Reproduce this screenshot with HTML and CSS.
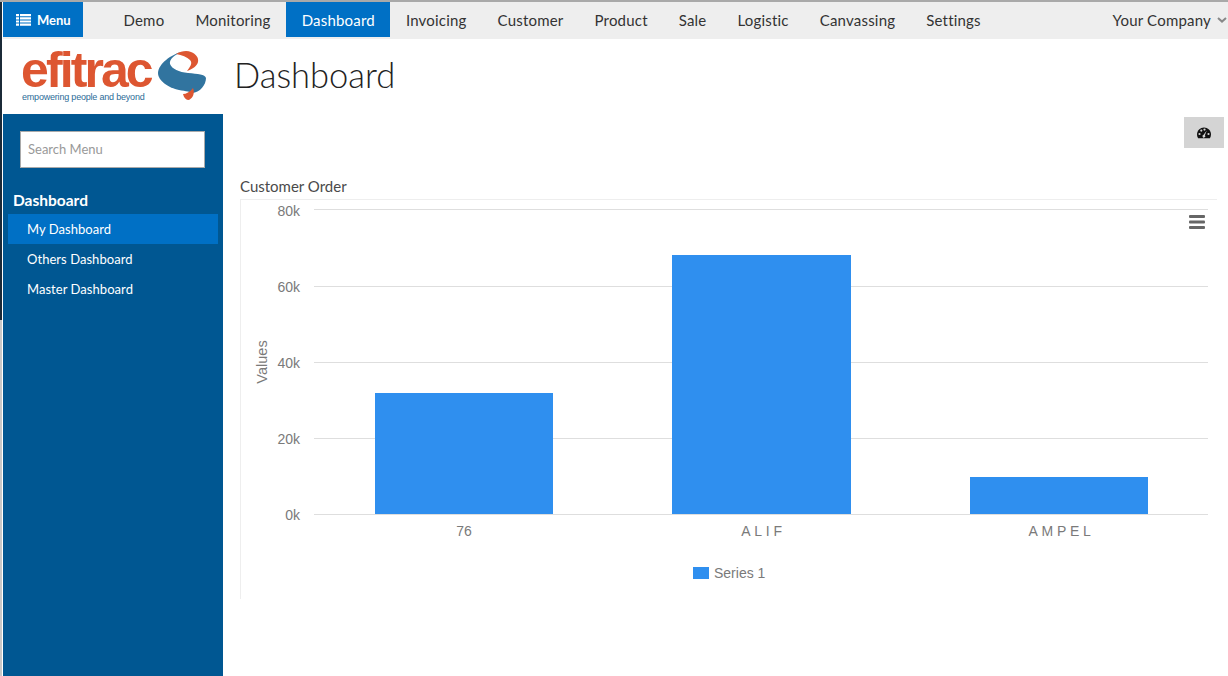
FILE: index.html
```html
<!DOCTYPE html>
<html lang="en">
<head>
  <meta charset="UTF-8">
  <title>Dashboard</title>
  <link rel="stylesheet" href="styles.css">
</head>
<body>
  <div class="app">
    <nav class="topbar">
      <a class="menu-btn" href="#">
        <svg class="menu-icon" width="15" height="12" viewBox="0 0 15 12"><path fill="#fff" d="M0 0h3v2.2H0zM4 0h11v2.2H4zM0 3.2h3v2.2H0zM4 3.2h11v2.2H4zM0 6.4h3v2.2H0zM4 6.4h11v2.2H4zM0 9.6h3v2.2H0zM4 9.6h11v2.2H4z"/></svg>
        Menu
      </a>
      <ul class="nav">
        <li>Demo</li>
        <li>Monitoring</li>
        <li class="active">Dashboard</li>
        <li>Invoicing</li>
        <li>Customer</li>
        <li>Product</li>
        <li>Sale</li>
        <li>Logistic</li>
        <li>Canvassing</li>
        <li>Settings</li>
      </ul>
      <div class="company">
        Your Company
        <svg width="10" height="6" viewBox="0 0 10 6"><path fill="none" stroke="#888" stroke-width="2" d="M1 1l4 3.6L9 1"/></svg>
      </div>
    </nav>

    <header class="head">
      <div class="logo">
        <div class="logo-text">
          <span class="logo-name">efitrac</span>
          <span class="logo-tag">empowering people and beyond</span>
        </div>
        <svg class="logo-mark" width="50" height="52" viewBox="156 49 50 52">
          <path fill="#31749f" d="M180 52C170 55 158 63 157 73C157 81 168 88 178 90C185 91 190 92 192 93C199 92 205 85 205 78C204 74 197 74 187 73C178 72 171 69 169 64C168 59 174 55 180 52Z"/>
          <path fill="#dd5631" d="M175 54C180 51 186 50 190 52C195 54 198 58 197 62C196 66 192 69 186 71C189 67 192 63 189 60C186 57 181 55 175 54Z"/>
          <path fill="#dd5631" d="M182 94C185 94 189 92 192 88C194 93 192 98 188 100C185 100 183 98 182 94Z"/>
        </svg>
      </div>
      <h1>Dashboard</h1>
    </header>

    <div class="body-row">
      <aside class="sidebar">
        <input class="search" type="text" placeholder="Search Menu">
        <h3>Dashboard</h3>
        <ul class="side-menu">
          <li class="active">My Dashboard</li>
          <li>Others Dashboard</li>
          <li>Master Dashboard</li>
        </ul>
      </aside>

      <main class="content">
        <div class="toolbar">
          <button class="gauge-btn" type="button">
            <svg width="14" height="12" viewBox="0 0 14 12">
              <path fill="#111" d="M7 0.5C3.2 0.5 0 3.6 0 7.5C0 8.9 0.4 10.200 1.100 11.300H12.900C13.600 10.200 14 8.900 14 7.500C14 3.600 10.800 0.500 7 0.500Z"/>
              <g fill="#d4d4d4">
                <circle cx="2.500" cy="7" r="1.100"/>
                <circle cx="4.300" cy="3.600" r="1.100"/>
                <circle cx="7.500" cy="2.600" r="1.100"/>
                <circle cx="11.500" cy="7" r="1.100"/>
                <path d="M9.800 3.500L7.900 8.200A1.400 1.400 0 1 1 6.600 7.800Z"/>
              </g>
            </svg>
          </button>
        </div>
        <div class="panel-title">Customer Order</div>
        <div class="chart">
          <svg width="977" height="399" viewBox="241 200 977 399">
            <g class="grid">
              <line x1="314" x2="1208" y1="209.500" y2="209.500"/>
              <line x1="314" x2="1208" y1="286.500" y2="286.500"/>
              <line x1="314" x2="1208" y1="362.500" y2="362.500"/>
              <line x1="314" x2="1208" y1="438.500" y2="438.500"/>
              <line x1="314" x2="1208" y1="514.500" y2="514.500"/>
            </g>
            <g class="bars">
              <rect x="375" y="393" width="178" height="121"/>
              <rect x="672" y="255" width="179" height="259"/>
              <rect x="970" y="477" width="178" height="37"/>
            </g>
            <g class="y-labels">
              <text x="300" y="216">80k</text>
              <text x="300" y="292">60k</text>
              <text x="300" y="368">40k</text>
              <text x="300" y="444">20k</text>
              <text x="300" y="520">0k</text>
            </g>
            <text class="y-title" transform="translate(267 362) rotate(-90)">Values</text>
            <g class="x-labels">
              <text x="464" y="536">76</text>
              <text class="spaced" x="763.500" y="536">ALIF</text>
              <text class="spaced" x="1061.500" y="536">AMPEL</text>
            </g>
            <rect class="legend-box" x="693" y="567" width="16" height="12"/>
            <text class="legend" x="714" y="578">Series 1</text>
            <g class="chart-menu">
              <rect x="1189" y="215" width="16" height="3" rx="1"/>
              <rect x="1189" y="220.500" width="16" height="3" rx="1"/>
              <rect x="1189" y="226" width="16" height="3" rx="1"/>
            </g>
          </svg>
        </div>
      </main>
    </div>
  </div>
</body>
</html>
```

FILE: styles.css
```css
* {
  box-sizing: border-box;
}

html, body {
  height: 100%;
}

body {
  margin: 0;
  font-family: 'Lato', sans-serif;
  background-color: white;
  color: #333;
  overflow: hidden;
}

.app {
  display: flex;
  flex-direction: column;
  height: 676px;
  padding-left: 3px;
  border-top: 2px solid #a9a9a9;
  background: linear-gradient(to bottom, #1b2a38 0, #1b2a38 318px, #c8c8c8 318px) no-repeat 0 0 / 2px 100%;
}

.topbar {
  display: flex;
  height: 37px;
  flex-shrink: 0;
  background-color: #eeeeee;
}

.menu-btn {
  display: flex;
  align-items: center;
  gap: 6px;
  width: 80px;
  height: 35px;
  padding-left: 13px;
  background-color: #0070c5;
  color: white;
  font-size: 13px;
  font-weight: bold;
  text-decoration: none;
}

.nav {
  display: flex;
  list-style: none;
  margin: 0 0 0 25px;
  padding: 0;
}

.nav li {
  height: 35px;
  line-height: 36px;
  padding: 0 15.500px;
  font-size: 15px;
  letter-spacing: 0.200px;
  color: #333;
}

.nav li.active {
  background-color: #0070c5;
  color: white;
}

.company {
  display: flex;
  align-items: center;
  gap: 6px;
  margin-left: auto;
  padding: 0 1px 2px 0;
  height: 37px;
  font-size: 15px;
  letter-spacing: 0.200px;
  color: #333;
}

.head {
  display: flex;
  height: 75px;
  flex-shrink: 0;
}

.logo {
  display: flex;
  width: 220px;
  padding: 10px 0 0 19px;
}

.logo-text {
  display: flex;
  flex-direction: column;
  width: 135px;
}

.logo-name {
  font-family: 'Liberation Sans', sans-serif;
  font-size: 50px;
  font-weight: bold;
  line-height: 42px;
  letter-spacing: -2.900px;
  margin-left: -1px;
  color: #dd5631;
}

.logo-tag {
  margin-top: 1px;
  font-family: 'Liberation Sans', sans-serif;
  font-size: 9px;
  line-height: 11px;
  letter-spacing: -0.200px;
  white-space: nowrap;
  color: #2c6c98;
}

.logo-mark {
  flex-shrink: 0;
}

h1 {
  margin: 15px 0 0 11px;
  font-size: 34.500px;
  font-weight: 300;
  line-height: 42px;
  color: #222;
}

.body-row {
  display: flex;
  flex: 1;
}

.sidebar {
  width: 220px;
  flex-shrink: 0;
  padding: 17px 5px 0;
  background-color: #005792;
}

.search {
  display: block;
  width: 185px;
  height: 37px;
  margin-left: 12px;
  padding: 0 7px 2px;
  border: 1px solid #aaa;
  background-color: white;
  font-family: inherit;
  font-size: 13px;
}

.search::placeholder {
  color: #999;
}

.sidebar h3 {
  margin: 22px 0 4px 5px;
  font-size: 15.500px;
  line-height: 20px;
  font-weight: bold;
  color: white;
}

.side-menu {
  list-style: none;
  margin: 0;
  padding: 0;
}

.side-menu li {
  height: 30px;
  line-height: 30px;
  padding-left: 19px;
  font-size: 13px;
  letter-spacing: 0.050px;
  color: white;
}

.side-menu li.active {
  background-color: #0070c5;
}

.content {
  flex: 1;
  padding: 3px 4px 0 17px;
}

.toolbar {
  display: flex;
  justify-content: flex-end;
  height: 31px;
}

.gauge-btn {
  display: flex;
  align-items: center;
  justify-content: center;
  width: 40px;
  height: 31px;
  padding: 0;
  border: 0;
  background-color: #d4d4d4;
}

.panel-title {
  margin-top: 30px;
  margin-right: 7px;
  height: 22px;
  line-height: 17px;
  font-size: 15px;
  color: #4a4a4a;
  border-bottom: 1px solid #eeeeee;
}

.chart {
  height: 399px;
  border-left: 1px solid #eeeeee;
}

.chart svg {
  display: block;
}

.grid line {
  stroke: #dedede;
  stroke-width: 1;
}

.bars rect,
.legend-box {
  fill: #2f8fef;
}

.chart text {
  font-family: 'Liberation Sans', sans-serif;
  font-size: 14px;
  fill: #7a7a7a;
}

.y-labels text {
  text-anchor: end;
}

.chart .y-title {
  text-anchor: middle;
  font-size: 14.500px;
}

.x-labels text {
  text-anchor: middle;
}

.x-labels .spaced {
  letter-spacing: 3.700px;
}

.chart-menu rect {
  fill: #666;
}
```
